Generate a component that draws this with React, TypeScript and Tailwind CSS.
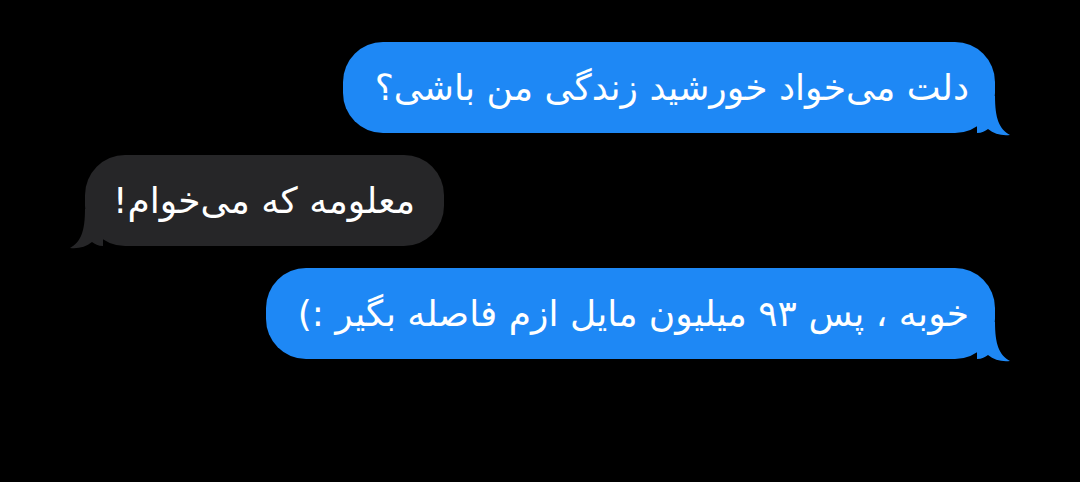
import React from 'react';

const FONT = { fontFamily: '"DejaVu Sans", "Noto Sans", sans-serif' };

function Tail({ side, color }: { side: 'left' | 'right'; color: string }) {
  const flip = side === 'left';
  return (
    <svg
      width="36"
      height="40"
      viewBox="0 0 36 40"
      className={flip ? 'absolute bottom-[-3px] left-[-18px] -scale-x-100' : 'absolute bottom-[-3px] right-[-18px]'}
    >
      <path d="M0 0 H18 C18 22 22 33 33 39 C25 40 17 38 11 33 C8 35 5 37 0 37 Z" fill={color} />
    </svg>
  );
}

function Bubble({ text, mine }: { text: string; mine: boolean }) {
  const color = mine ? '#1e88f5' : '#262628';
  return (
    <div
      className={`relative flex h-[91px] items-center rounded-[40px] text-[36px] leading-none text-white ${
        mine ? 'self-end bg-[#1e88f5] pl-[32px] pr-[26px]' : 'self-start bg-[#262628] pl-[28px] pr-[29px]'
      }`}
      style={FONT}
      dir="rtl"
    >
      <Tail side={mine ? 'right' : 'left'} color={color} />
      <span className="relative">{text}</span>
    </div>
  );
}

export default function App() {
  return (
    <div className="h-[482px] w-[1080px] overflow-hidden bg-black">
      <div className="flex flex-col gap-[22px] pl-[85px] pr-[85px] pt-[42px]">
        <Bubble mine text="دلت می‌خواد خورشید زندگی من باشی؟" />
        <Bubble mine={false} text="معلومه که می‌خوام!" />
        <Bubble mine text="خوبه ، پس ۹۳ میلیون مایل ازم فاصله بگیر :)" />
      </div>
    </div>
  );
}
